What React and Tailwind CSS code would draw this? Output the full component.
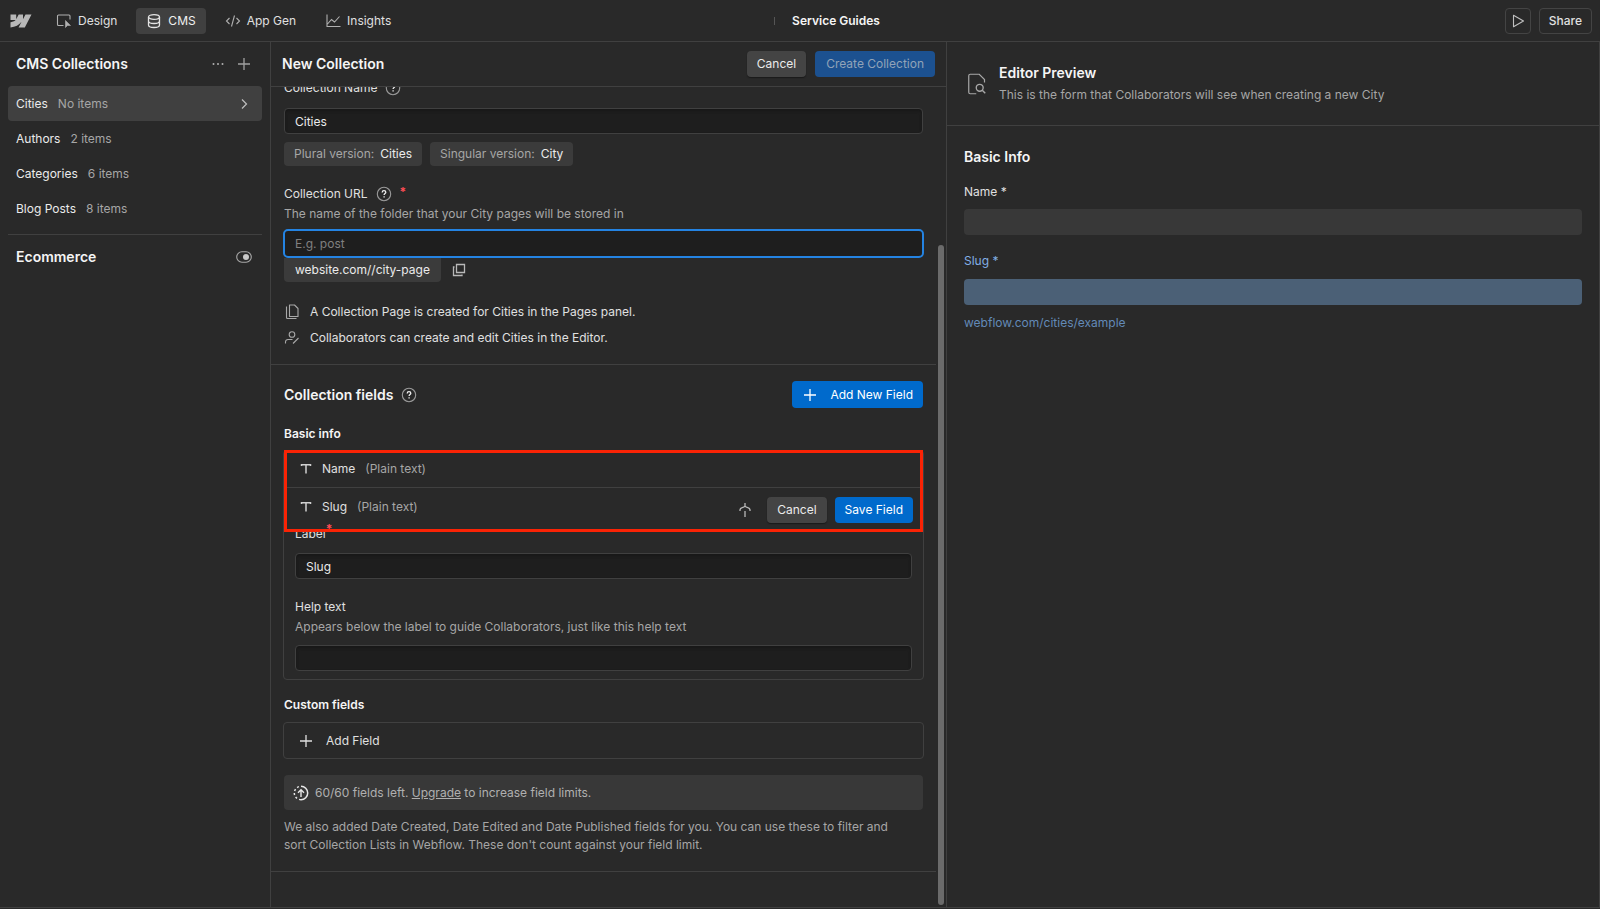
import React from "react";

const collections = [
  { name: "Cities", count: "No items", active: true },
  { name: "Authors", count: "2 items" },
  { name: "Categories", count: "6 items" },
  { name: "Blog Posts", count: "8 items" },
];

const Icon = ({ size = 16, className = "", children }) => (
  <svg
    width={size}
    height={size}
    viewBox="0 0 16 16"
    fill="none"
    stroke="currentColor"
    strokeWidth="1.1"
    aria-hidden="true"
    className={`shrink-0 ${className}`}
  >
    {children}
  </svg>
);

const WebflowLogo = () => (
  <svg width="22" height="14" viewBox="0 0 22 14" fill="#b8b8b8" aria-label="Webflow" className="shrink-0">
    <path d="M21.5.5 14.8 13.5H8.6l2.8-5.4h-.1C9 11.1 5.5 13.1.5 13.5V8.2s3.2-.2 5.1-2.2H.5V.5h5.7V5h.1L8.7.5H13V5h.1L15.5.5z" />
  </svg>
);

const DesignIcon = () => (
  <Icon className="text-[#b0b0b0]">
    <path d="M7.5 12.500H2.500a1 1 0 0 1-1-1V3a1 1 0 0 1 1-1H13a1 1 0 0 1 1 1v3.500" />
    <path d="M9.500 7.500v7l2-2h3z" fill="currentColor" strokeLinejoin="round" strokeWidth="0.6" />
  </Icon>
);

const DatabaseIcon = () => (
  <Icon className="text-[#e4e4e4]">
    <ellipse cx="8" cy="4" rx="5.5" ry="2.4" strokeWidth="1.3" />
    <path
      d="M2.5 4v8c0 1.400 2.500 2.500 5.500 2.500s5.500-1.100 5.500-2.500V4M2.500 8c0 1.400 2.500 2.500 5.500 2.500s5.500-1.100 5.500-2.500"
      strokeWidth="1.3"
    />
  </Icon>
);

const CodeIcon = () => (
  <Icon className="text-[#b0b0b0]">
    <path d="M4.500 5 1.500 8l3 3M11.500 5l3 3-3 3M9.500 2.500l-3 11" />
  </Icon>
);

const InsightsIcon = () => (
  <Icon className="text-[#b0b0b0]">
    <path d="M2 1.500v12h13.500M2.500 11l4-4.500 3 2.500 5-5.500" />
  </Icon>
);

const PlusIcon = ({ className }) => (
  <Icon className={className}>
    <path d="M8 2v12M2 8h12" strokeWidth="1.3" />
  </Icon>
);

const HelpIcon = () => (
  <Icon className="text-[#9a9a9a]">
    <circle cx="8" cy="8" r="6.7" />
    <path
      d="M6.200 6.500c0-1.100.8-1.800 1.800-1.800s1.800.7 1.800 1.600c0 1.200-1.700 1.300-1.700 2.700M8.100 10.200v1.300"
      stroke="#f0f0f0"
      strokeWidth="1.3"
    />
  </Icon>
);

const TextIcon = () => (
  <Icon className="text-[#d0d0d0]">
    <path d="M3.500 5V3.800h9V5M8 3.800V12.500" strokeWidth="1.5" />
  </Icon>
);

const NavItem = ({ icon, label, active }) => (
  <button
    className={`flex h-[26px] items-center gap-1.5 rounded px-2.5 ${
      active ? "bg-[#404040] text-[#f0f0f0]" : "text-[#e0e0e0]"
    }`}
  >
    {icon}
    {label}
  </button>
);

const inputStyle =
  "block h-[26px] w-full rounded border border-[#404040] bg-[#1e1e1e] px-2.5 text-[#ebebeb] shadow-[inset_0_2px_3px_#181818] outline-none";

const secondaryButton =
  "h-[26px] rounded bg-[#444444] px-2.5 text-[#ebebeb] shadow-[0_1px_1px_#1a1a1a]";

const TopBar = () => (
  <header className="flex h-[42px] shrink-0 items-center justify-between border-b border-[#404040] pr-2 pl-2.5">
    <div className="flex flex-1 items-center gap-3.5">
      <WebflowLogo />
      <nav className="flex items-center gap-[9px]">
        <NavItem icon={<DesignIcon />} label="Design" />
        <NavItem icon={<DatabaseIcon />} label="CMS" active />
        <NavItem icon={<CodeIcon />} label="App Gen" />
        <NavItem icon={<InsightsIcon />} label="Insights" />
      </nav>
    </div>
    <div className="flex items-center gap-[17px] pl-[52px]">
      <span className="h-2 w-px bg-[#555555]" />
      <span className="font-semibold text-[#f5f5f5]">Service Guides</span>
    </div>
    <div className="flex flex-1 items-center justify-end gap-2">
      <button
        aria-label="Preview"
        className="flex size-[26px] items-center justify-center rounded border border-[#444444] text-[#c0c0c0]"
      >
        <Icon>
          <path d="M3.500 2.300v11.400L13.500 8z" strokeLinejoin="round" />
        </Icon>
      </button>
      <button className="h-[26px] rounded border border-[#444444] px-[9px] font-medium text-[#e0e0e0]">
        Share
      </button>
    </div>
  </header>
);

const Sidebar = () => (
  <aside className="border-r border-[#404040] px-2">
    <div className="flex h-11 items-center pr-2.5 pl-2">
      <h2 className="flex-1 text-sm font-semibold text-[#f5f5f5]">CMS Collections</h2>
      <button aria-label="More" className="mr-2.5 text-[#b0b0b0]">
        <Icon>
          <g fill="currentColor" stroke="none">
            <circle cx="3.5" cy="8" r="1" />
            <circle cx="8" cy="8" r="1" />
            <circle cx="12.5" cy="8" r="1" />
          </g>
        </Icon>
      </button>
      <button aria-label="Add collection" className="text-[#a0a0a0]">
        <PlusIcon />
      </button>
    </div>
    <ul className="border-b border-[#404040] pb-2">
      {collections.map((item) => (
        <li key={item.name}>
          <button
            className={`flex h-[35px] w-full items-center gap-2.5 rounded pr-2.5 pl-2 text-left ${
              item.active ? "bg-[#404040]" : ""
            }`}
          >
            <span className="text-[#ebebeb]">{item.name}</span>
            <span className="flex-1 text-[#a6a6a6]">{item.count}</span>
            {item.active && (
              <Icon className="text-[#c0c0c0]">
                <path d="M6 3.500 10.500 8 6 12.500" strokeWidth="1.2" />
              </Icon>
            )}
          </button>
        </li>
      ))}
    </ul>
    <div className="flex h-11 items-center justify-between pr-2.5 pl-2">
      <h2 className="text-sm font-semibold text-[#f5f5f5]">Ecommerce</h2>
      <Icon className="text-[#a8a8a8]">
        <rect x="0.7" y="2.8" width="14.6" height="10.4" rx="5.2" />
        <circle cx="10" cy="8" r="3" fill="#c8c8c8" stroke="none" />
      </Icon>
    </div>
  </aside>
);

const CollectionSettings = () => (
  <section className="border-b border-[#404040] px-[13px] pb-[13px]">
    <div className="flex h-5 items-center gap-2">
      <label htmlFor="collection-name">Collection Name</label>
      <HelpIcon />
    </div>
    <input id="collection-name" defaultValue="Cities" className={`mt-2.5 ${inputStyle}`} />
    <div className="mt-2 flex gap-2">
      <span className="flex h-6 items-center gap-1.5 rounded bg-[#3b3b3b] px-2.5 text-[#a6a6a6]">
        Plural version: <span className="text-[#ebebeb]">Cities</span>
      </span>
      <span className="flex h-6 items-center gap-1.5 rounded bg-[#3b3b3b] px-2.5 text-[#a6a6a6]">
        Singular version: <span className="text-[#ebebeb]">City</span>
      </span>
    </div>

    <div className="mt-[18px] flex h-5 items-center gap-2">
      <label htmlFor="collection-url">Collection URL</label>
      <HelpIcon />
      <span className="self-start leading-4 font-bold text-[#ff4d55]">*</span>
    </div>
    <p className="h-5 leading-5 text-[#a6a6a6]">
      The name of the folder that your City pages will be stored in
    </p>
    <div className="-mx-px mt-[5px]">
      <input
        id="collection-url"
        placeholder="E.g. post"
        className="block h-[29px] w-full rounded-[5px] border-2 border-[#2483e2] bg-[#1e1e1e] px-2.5 outline-none placeholder:text-[#808080]"
      />
    </div>
    <div className="flex items-center gap-2.5">
      <span className="flex h-6 items-center rounded-b bg-[#3b3b3b] px-[11px] text-[#ebebeb]">
        website.com//city-page
      </span>
      <button aria-label="Copy URL" className="text-[#b8b8b8]">
        <Icon>
          <path d="M5.500 2.500h8v8h-8zM3.500 5H2.500v8.500H11v-1" strokeWidth="1.3" />
        </Icon>
      </button>
    </div>
    <ul className="mt-[17px]">
      <li className="flex h-[26px] items-center gap-2.5">
        <Icon className="text-[#a8a8a8]">
          <path d="M5.500 1h5l3.500 3.500v8h-8.500zM2.500 2.500v11a1 1 0 0 0 1 1h9" strokeLinejoin="round" />
        </Icon>
        A Collection Page is created for Cities in the Pages panel.
      </li>
      <li className="flex h-[26px] items-center gap-2.5">
        <Icon className="text-[#a8a8a8]">
          <circle cx="8" cy="4.5" r="2.800" />
          <path d="M1.500 13.500v-1.500a2.500 2.500 0 0 1 2.500-2.500h4.500M9 13.500l5.500-5.500" />
        </Icon>
        Collaborators can create and edit Cities in the Editor.
      </li>
    </ul>
  </section>
);

const FieldsCard = () => (
  <div className="relative -mx-px mt-1.5 rounded border border-[#404040]">
    <div className="flex h-[37px] items-center border-b border-[#404040] px-3.5">
      <TextIcon />
      <span className="ml-2">Name</span>
      <span className="ml-2.5 text-[#a6a6a6]">(Plain text)</span>
    </div>
    <div className="flex h-11 items-center pr-2.5 pl-3.5">
      <div className="mb-1.5 flex flex-1 items-center">
        <TextIcon />
        <span className="ml-2">Slug</span>
        <span className="ml-2.5 text-[#a6a6a6]">(Plain text)</span>
      </div>
      <button aria-label="Collapse" className="mr-3.5 text-[#b8b8b8]">
        <Icon>
          <path d="M8 1v4M8 9v6M3 9V8c0-1.500 1-2 2.200-2.300C6.500 5.400 7.400 5 8 4.200c.6.800 1.500 1.200 2.800 1.500C12 6 13 6.500 13 8v1" strokeWidth="1.3" />
        </Icon>
      </button>
      <button className={secondaryButton}>Cancel</button>
      <button className="ml-2 h-[26px] rounded bg-[#006acc] px-2.5 text-white">Save Field</button>
    </div>
    <div className="-mt-2 px-[11px] pb-2">
      <label htmlFor="field-label" className="flex h-5 items-center">
        Label
        <span className="self-start leading-2.5 font-bold text-[#ff4d55]">*</span>
      </label>
      <input id="field-label" defaultValue="Slug" className={`mt-[9px] ${inputStyle}`} />
      <label htmlFor="field-help" className="mt-[18px] block h-5 leading-5">
        Help text
      </label>
      <p className="h-5 leading-5 text-[#a6a6a6]">
        Appears below the label to guide Collaborators, just like this help text
      </p>
      <input id="field-help" className={`mt-2 ${inputStyle}`} />
    </div>
    <div className="pointer-events-none absolute inset-x-0 -top-px h-[82px] border-3 border-[#fa2305]" />
  </div>
);

const CollectionFields = () => (
  <section className="border-b border-[#404040] px-[13px] pt-4 pb-[17px]">
    <div className="flex items-center">
      <h3 className="text-sm font-semibold text-[#f5f5f5]">Collection fields</h3>
      <span className="ml-2 flex-1">
        <HelpIcon />
      </span>
      <button className="flex h-[27px] items-center gap-3 rounded bg-[#006acc] px-2.5 text-white">
        <PlusIcon />
        Add New Field
      </button>
    </div>
    <h4 className="mt-4 h-5 leading-5 font-semibold text-[#f5f5f5]">Basic info</h4>
    <FieldsCard />
    <h4 className="mt-[15px] h-5 leading-5 font-semibold text-[#f5f5f5]">Custom fields</h4>
    <div className="-mx-px mt-[7px]">
      <button className="flex h-[37px] w-full items-center gap-3 rounded border border-[#404040] px-3.5">
        <PlusIcon />
        Add Field
      </button>
    </div>
    <div className="mt-4 flex h-[35px] items-center gap-1.5 rounded bg-[#383838] px-[9px] text-[#b0b0b0]">
      <Icon className="text-[#e8e8e8]">
        <path d="M8 1.300a6.700 6.700 0 0 1 0 13.400" strokeWidth="1.5" />
        <path d="M8 14.700A6.700 6.700 0 0 1 8 1.300" strokeWidth="1.5" strokeDasharray="2 2.2" />
        <path d="M8 12V5M5 7.800l3-3 3 3" strokeWidth="1.4" />
      </Icon>
      <p>
        60/60 fields left.{" "}
        <a href="#upgrade" className="underline">
          Upgrade
        </a>{" "}
        to increase field limits.
      </p>
    </div>
    <p className="mt-2 pr-5 leading-[18px] text-[#a6a6a6]">
      We also added Date Created, Date Edited and Date Published fields for you. You can use these
      to filter and sort Collection Lists in Webflow. These don't count against your field limit.
    </p>
  </section>
);

const CollectionEditor = () => (
  <main className="flex flex-col border-r border-[#404040]">
    <div className="flex h-[45px] shrink-0 items-center gap-[9px] border-b border-[#404040] px-[11px]">
      <h2 className="flex-1 text-sm font-semibold text-[#f5f5f5]">New Collection</h2>
      <button className={secondaryButton}>Cancel</button>
      <button disabled className="h-[26px] rounded bg-[#1c5190] px-[11px] text-[#91a3b8]">
        Create Collection
      </button>
    </div>
    <div className="flex flex-1 overflow-hidden">
      <div className="-mt-[9px] flex-1">
        <CollectionSettings />
        <CollectionFields />
      </div>
      <div className="mx-0.5 mt-[158px] mb-0.5 w-1.5 rounded-full bg-[#6b6b6b]" />
    </div>
  </main>
);

const EditorPreview = () => (
  <section className="border-r border-[#404040]">
    <div className="flex h-[84px] items-center gap-2.5 border-b border-[#404040] px-[18px]">
      <Icon size={24} className="text-[#a8a8a8]">
        <path d="M7.500 14.500H3.500a1 1 0 0 1-1-1v-11a1 1 0 0 1 1-1h6l3.500 3.500v2" strokeWidth="0.8" />
        <circle cx="9.8" cy="10.5" r="2.3" strokeWidth="0.9" />
        <path d="m11.500 12.200 2 2" strokeWidth="0.9" />
      </Icon>
      <div>
        <h2 className="h-[22px] text-sm leading-[22px] font-semibold text-[#f5f5f5]">Editor Preview</h2>
        <p className="h-[22px] leading-[22px] text-[#a6a6a6]">
          This is the form that Collaborators will see when creating a new City
        </p>
      </div>
    </div>
    <div className="px-[17px] pt-5">
      <h3 className="h-[22px] text-sm leading-[22px] font-semibold text-[#f5f5f5]">Basic Info</h3>
      <label htmlFor="preview-name" className="mt-3.5 block h-5 leading-5">
        Name *
      </label>
      <input id="preview-name" className="mt-[7px] block h-[26px] w-full rounded bg-[#383838] px-2" />
      <label htmlFor="preview-slug" className="mt-4 block h-5 leading-5 text-[#82afe6]">
        Slug *
      </label>
      <input id="preview-slug" className="mt-2 block h-[26px] w-full rounded bg-[#4b6076] px-2" />
      <p className="mt-2 h-5 leading-5 text-[#638ab8]">webflow.com/cities/example</p>
    </div>
  </section>
);

const App = () => (
  <div className="flex min-h-screen flex-col bg-[#292929] font-['Inter',sans-serif] text-xs text-[#e0e0e0]">
    <TopBar />
    <div className="mb-px grid flex-1 grid-cols-[271px_minmax(0,676fr)_minmax(0,653fr)] border-b border-[#404040]">
      <Sidebar />
      <CollectionEditor />
      <EditorPreview />
    </div>
  </div>
);

export default App;
